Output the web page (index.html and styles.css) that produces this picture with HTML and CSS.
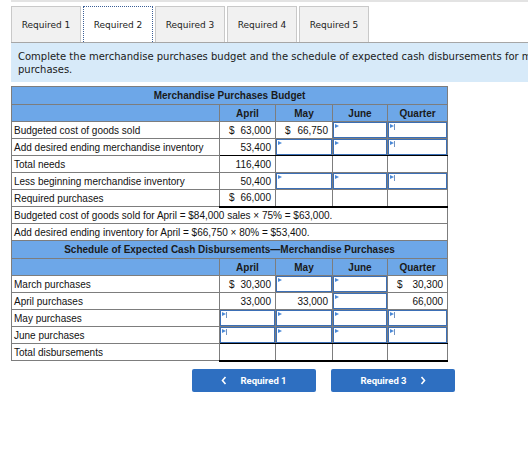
FILE: index.html
```html
<!DOCTYPE html>
<html>
<head>
<meta charset="utf-8">
<link rel="stylesheet" href="styles.css">
</head>
<body>
<div class="topline"></div>
<div class="wrap">
  <div class="tabs">
    <div class="tab">Required 1</div>
    <div class="tab active">Required 2</div>
    <div class="tab">Required 3</div>
    <div class="tab">Required 4</div>
    <div class="tab">Required 5</div>
  </div>
  <div class="info">Complete the merchandise purchases budget and the schedule of expected cash disbursements for merchandise purchases.</div>

  <table class="grid">
    <colgroup>
      <col class="c-label"><col class="c-apr"><col class="c-may"><col class="c-jun"><col class="c-qtr">
    </colgroup>
    <tr class="title"><th colspan="5">Merchandise Purchases Budget</th></tr>
    <tr class="head"><th></th><th>April</th><th>May</th><th>June</th><th>Quarter</th></tr>
    <tr>
      <td class="lbl">Budgeted cost of goods sold</td>
      <td><div class="m"><span>$</span><span>63,000</span></div></td>
      <td><div class="m"><span>$</span><span>66,750</span></div></td>
      <td class="in"><div class="inp"></div></td>
      <td class="in"><div class="inp bar"></div></td>
    </tr>
    <tr class="sub">
      <td class="lbl">Add desired ending merchandise inventory</td>
      <td class="amt">53,400</td>
      <td class="in"><div class="inp"></div></td>
      <td class="in"><div class="inp"></div></td>
      <td class="in"><div class="inp bar"></div></td>
    </tr>
    <tr>
      <td class="lbl">Total needs</td>
      <td class="amt">116,400</td>
      <td></td><td></td><td></td>
    </tr>
    <tr>
      <td class="lbl">Less beginning merchandise inventory</td>
      <td class="amt">50,400</td>
      <td class="in"><div class="inp"></div></td>
      <td class="in"><div class="inp"></div></td>
      <td class="in"><div class="inp bar"></div></td>
    </tr>
    <tr class="total">
      <td class="lbl">Required purchases</td>
      <td><div class="m"><span>$</span><span>66,000</span></div></td>
      <td></td><td></td><td></td>
    </tr>
    <tr><td class="lbl note" colspan="5">Budgeted cost of goods sold for April = $84,000 sales × 75% = $63,000.</td></tr>
    <tr><td class="lbl note" colspan="5">Add desired ending inventory for April = $66,750 × 80% = $53,400.</td></tr>

    <tr class="title"><th colspan="5">Schedule of Expected Cash Disbursements—Merchandise Purchases</th></tr>
    <tr class="head"><th></th><th>April</th><th>May</th><th>June</th><th>Quarter</th></tr>
    <tr>
      <td class="lbl">March purchases</td>
      <td><div class="m"><span>$</span><span>30,300</span></div></td>
      <td class="in"><div class="inp"></div></td>
      <td class="in"><div class="inp"></div></td>
      <td><div class="m"><span>$</span><span>30,300</span></div></td>
    </tr>
    <tr>
      <td class="lbl">April purchases</td>
      <td class="amt">33,000</td>
      <td class="amt">33,000</td>
      <td class="in"><div class="inp"></div></td>
      <td class="amt">66,000</td>
    </tr>
    <tr>
      <td class="lbl">May purchases</td>
      <td class="in"><div class="inp bar"></div></td>
      <td class="in"><div class="inp"></div></td>
      <td class="in"><div class="inp"></div></td>
      <td class="in"><div class="inp bar"></div></td>
    </tr>
    <tr class="sub">
      <td class="lbl">June purchases</td>
      <td class="in"><div class="inp bar"></div></td>
      <td class="in"><div class="inp"></div></td>
      <td class="in"><div class="inp"></div></td>
      <td class="in"><div class="inp bar"></div></td>
    </tr>
    <tr class="total">
      <td class="lbl">Total disbursements</td>
      <td></td><td></td><td></td><td></td>
    </tr>
  </table>

  <div class="nav">
    <div class="btn">
      <svg width="6" height="9" viewBox="0 0 6 9"><polyline points="4.5,1 1.5,4.5 4.5,8" fill="none" stroke="#fff" stroke-width="1.6"/></svg>
      <span>Required 1</span>
    </div>
    <div class="btn">
      <span>Required 3</span>
      <svg width="6" height="9" viewBox="0 0 6 9"><polyline points="1.5,1 4.5,4.5 1.5,8" fill="none" stroke="#fff" stroke-width="1.6"/></svg>
    </div>
  </div>
</div>
</body>
</html>
```

FILE: styles.css
```css
html, body {
  margin: 0;
  padding: 0;
  background: #fff;
  overflow: hidden;
}
body {
  font-family: "DejaVu Sans", Verdana, sans-serif;
  color: #1a1a1a;
}
.topline {
  margin-left: 11px;
  height: 2px;
  background: #e3e3e3;
}
.wrap {
  margin-left: 11px;
  width: 625px;
}
.tabs {
  display: flex;
  gap: 2px;
  margin-top: 4px;
  height: 36px;
}
.tab {
  width: 70px;
  box-sizing: border-box;
  border: 1px solid #c9c9c9;
  border-bottom: none;
  background: #f1f1f1;
  font-size: 9px;
  display: flex;
  align-items: center;
  justify-content: center;
  color: #222;
}
.tab.active {
  background: #fff;
  border: 1px dotted #3b5f96;
  border-bottom: none;
}
.info {
  border-top: 1px solid #a6a6a6;
  background: #d7eaf9;
  padding: 7px 7px 6px;
  font-size: 10px;
  line-height: 13px;
  color: #1a1a1a;
}
.grid {
  margin-top: 4px;
  border-collapse: collapse;
  table-layout: fixed;
  width: 436px;
  font-family: "Liberation Sans", Arial, sans-serif;
  font-size: 10px;
  color: #111;
}
.c-label { width: 208px; }
.c-apr { width: 56px; }
.c-may { width: 57px; }
.c-jun { width: 55px; }
.c-qtr { width: 60px; }
.grid td, .grid th {
  border: 1px solid #7d7d7d;
  padding: 0;
  height: 17px;
  box-sizing: border-box;
  white-space: nowrap;
  overflow: hidden;
}
.grid th {
  background: #6da7e8;
  font-weight: bold;
  color: #1a1a1a;
  text-align: center;
}
.grid .title th {
  height: 18px;
}
.lbl {
  padding-left: 2px !important;
  text-align: left;
}
.amt {
  text-align: right;
  padding-right: 4px !important;
}
.m {
  display: flex;
  justify-content: space-between;
  padding: 0 4px 0 9px;
}
.in {
  padding: 0;
}
.inp {
  position: relative;
  height: 16px;
  box-sizing: border-box;
  border: 1px solid #3b6fb6;
  background: #fff;
}
.inp::before {
  content: "";
  position: absolute;
  left: 1px;
  top: 1px;
  width: 0;
  height: 0;
  border-left: 4px solid #4a88d6;
  border-top: 2.5px solid transparent;
  border-bottom: 2.5px solid transparent;
}
.inp.bar::after {
  content: "";
  position: absolute;
  left: 5px;
  top: 1px;
  width: 1px;
  height: 6px;
  background: #6f93c4;
}
.sub td:not(.lbl) {
  border-bottom: 1px solid #000;
}
.total td:not(.lbl) {
  border-bottom: 2px solid #000;
}
.nav {
  display: flex;
  justify-content: center;
  gap: 15px;
  margin-top: 7px;
}
.btn {
  width: 124px;
  height: 23px;
  background: #2e6fc1;
  border-radius: 2px;
  color: #fff;
  font-family: Roboto, "Liberation Sans", sans-serif;
  font-weight: bold;
  font-size: 9.5px;
  display: flex;
  align-items: center;
  justify-content: center;
  gap: 13px;
}
.btn svg {
  display: block;
}
```
